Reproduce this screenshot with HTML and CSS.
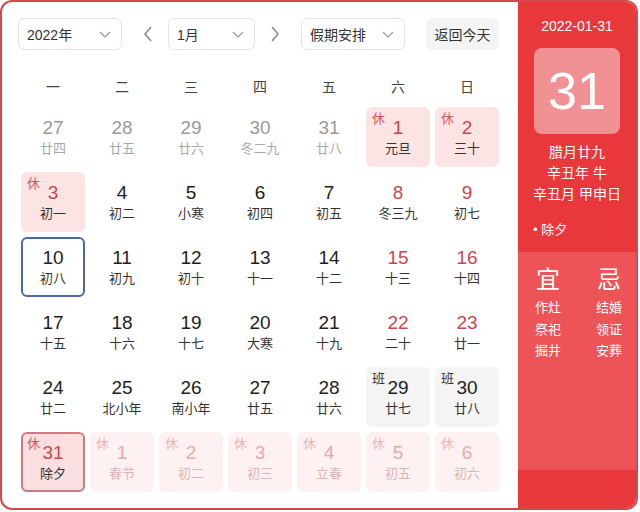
FILE: index.html
```html
<!DOCTYPE html>
<html lang="zh-CN">
<head>
<meta charset="utf-8">
<title>万年历</title>
<link rel="stylesheet" href="styles.css">
</head>
<body>
<div class="cal">
  <div class="main">
    <div class="toolbar">
      <div class="select sel-year"><span>2022年</span>
        <svg class="chev" width="12" height="7" viewBox="0 0 12 7"><polyline points="1,1 6,6 11,1" fill="none" stroke="#999" stroke-width="1.2"/></svg>
      </div>
      <button class="arrow arrow-prev" aria-label="上个月">
        <svg width="10" height="16" viewBox="0 0 10 16"><polyline points="8,1 2,8 8,15" fill="none" stroke="#888" stroke-width="1.5"/></svg>
      </button>
      <div class="select sel-month"><span>1月</span>
        <svg class="chev" width="12" height="7" viewBox="0 0 12 7"><polyline points="1,1 6,6 11,1" fill="none" stroke="#999" stroke-width="1.2"/></svg>
      </div>
      <button class="arrow arrow-next" aria-label="下个月">
        <svg width="10" height="16" viewBox="0 0 10 16"><polyline points="2,1 8,8 2,15" fill="none" stroke="#888" stroke-width="1.5"/></svg>
      </button>
      <div class="select sel-hol"><span>假期安排</span>
        <svg class="chev" width="12" height="7" viewBox="0 0 12 7"><polyline points="1,1 6,6 11,1" fill="none" stroke="#999" stroke-width="1.2"/></svg>
      </div>
      <button class="today-btn">返回今天</button>
    </div>

    <div class="grid">
      <div class="wd">一</div><div class="wd">二</div><div class="wd">三</div><div class="wd">四</div><div class="wd">五</div><div class="wd">六</div><div class="wd">日</div>

      <div class="cell prev"><span class="num">27</span><span class="lunar">廿四</span></div>
      <div class="cell prev"><span class="num">28</span><span class="lunar">廿五</span></div>
      <div class="cell prev"><span class="num">29</span><span class="lunar">廿六</span></div>
      <div class="cell prev"><span class="num">30</span><span class="lunar">冬二九</span></div>
      <div class="cell prev"><span class="num">31</span><span class="lunar">廿八</span></div>
      <div class="cell hol"><i class="tag">休</i><span class="num">1</span><span class="lunar">元旦</span></div>
      <div class="cell hol"><i class="tag">休</i><span class="num">2</span><span class="lunar">三十</span></div>

      <div class="cell hol"><i class="tag">休</i><span class="num">3</span><span class="lunar">初一</span></div>
      <div class="cell"><span class="num">4</span><span class="lunar">初二</span></div>
      <div class="cell"><span class="num">5</span><span class="lunar">小寒</span></div>
      <div class="cell"><span class="num">6</span><span class="lunar">初四</span></div>
      <div class="cell"><span class="num">7</span><span class="lunar">初五</span></div>
      <div class="cell wkd"><span class="num">8</span><span class="lunar">冬三九</span></div>
      <div class="cell wkd"><span class="num">9</span><span class="lunar">初七</span></div>

      <div class="cell today"><span class="num">10</span><span class="lunar">初八</span></div>
      <div class="cell"><span class="num">11</span><span class="lunar">初九</span></div>
      <div class="cell"><span class="num">12</span><span class="lunar">初十</span></div>
      <div class="cell"><span class="num">13</span><span class="lunar">十一</span></div>
      <div class="cell"><span class="num">14</span><span class="lunar">十二</span></div>
      <div class="cell wkd"><span class="num">15</span><span class="lunar">十三</span></div>
      <div class="cell wkd"><span class="num">16</span><span class="lunar">十四</span></div>

      <div class="cell"><span class="num">17</span><span class="lunar">十五</span></div>
      <div class="cell"><span class="num">18</span><span class="lunar">十六</span></div>
      <div class="cell"><span class="num">19</span><span class="lunar">十七</span></div>
      <div class="cell"><span class="num">20</span><span class="lunar">大寒</span></div>
      <div class="cell"><span class="num">21</span><span class="lunar">十九</span></div>
      <div class="cell wkd"><span class="num">22</span><span class="lunar">二十</span></div>
      <div class="cell wkd"><span class="num">23</span><span class="lunar">廿一</span></div>

      <div class="cell"><span class="num">24</span><span class="lunar">廿二</span></div>
      <div class="cell"><span class="num">25</span><span class="lunar">北小年</span></div>
      <div class="cell"><span class="num">26</span><span class="lunar">南小年</span></div>
      <div class="cell"><span class="num">27</span><span class="lunar">廿五</span></div>
      <div class="cell"><span class="num">28</span><span class="lunar">廿六</span></div>
      <div class="cell work"><i class="tag">班</i><span class="num">29</span><span class="lunar">廿七</span></div>
      <div class="cell work"><i class="tag">班</i><span class="num">30</span><span class="lunar">廿八</span></div>

      <div class="cell hol selected"><i class="tag">休</i><span class="num">31</span><span class="lunar">除夕</span></div>
      <div class="cell hol next"><i class="tag">休</i><span class="num">1</span><span class="lunar">春节</span></div>
      <div class="cell hol next"><i class="tag">休</i><span class="num">2</span><span class="lunar">初二</span></div>
      <div class="cell hol next"><i class="tag">休</i><span class="num">3</span><span class="lunar">初三</span></div>
      <div class="cell hol next"><i class="tag">休</i><span class="num">4</span><span class="lunar">立春</span></div>
      <div class="cell hol next"><i class="tag">休</i><span class="num">5</span><span class="lunar">初五</span></div>
      <div class="cell hol next"><i class="tag">休</i><span class="num">6</span><span class="lunar">初六</span></div>
    </div>
  </div>

  <aside class="side">
    <div class="side-top">
      <div class="side-date">2022-01-31</div>
      <div class="big-day">31</div>
      <div class="lunar-info">
        <div>腊月廿九</div>
        <div>辛丑年 牛</div>
        <div>辛丑月 甲申日</div>
      </div>
      <div class="festival">• 除夕</div>
    </div>
    <div class="yiji">
      <div class="yj-col">
        <div class="yj-title">宜</div>
        <div>作灶</div><div>祭祀</div><div>掘井</div>
      </div>
      <div class="yj-col">
        <div class="yj-title">忌</div>
        <div>结婚</div><div>领证</div><div>安葬</div>
      </div>
    </div>
  </aside>
</div>
</body>
</html>
```

FILE: styles.css
```css
* { box-sizing: border-box; }
html, body { margin: 0; padding: 0; background: #fff; }
body {
  font-family: "Liberation Sans", "Noto Sans CJK SC", sans-serif;
  color: #222;
}
.cal {
  width: 638px;
  height: 510px;
  border: 2px solid #d24a4e;
  border-radius: 12px;
  overflow: hidden;
  display: flex;
}
.main {
  width: 516px;
  padding: 16px 0 0 16px;
}
.toolbar {
  display: flex;
  align-items: center;
  height: 32px;
}
.select {
  height: 32px;
  border: 1px solid #e4e4e4;
  border-radius: 6px;
  display: flex;
  align-items: center;
  justify-content: space-between;
  padding: 0 10px 0 8px;
  font-size: 14px;
  color: #333;
}
.sel-year { width: 104px; }
.sel-month { width: 87px; }
.sel-hol { width: 104px; }
.arrow {
  border: 0;
  background: none;
  padding: 0;
  height: 32px;
  display: flex;
  align-items: center;
}
.arrow-prev { margin: 0 15px 0 21px; }
.arrow-next { margin: 0 21px 0 15px; }
.today-btn {
  margin-left: 21px;
  width: 73px;
  height: 32px;
  border: 0;
  border-radius: 6px;
  background: #f4f4f4;
  font-family: inherit;
  font-size: 14px;
  color: #333;
  padding: 0;
}
.grid {
  margin: 20px 0 0 3px;
  display: grid;
  grid-template-columns: repeat(7, 64px);
  grid-template-rows: 32px repeat(6, 60px);
  gap: 5px;
}
.wd {
  display: flex;
  align-items: center;
  justify-content: center;
  font-size: 14px;
  color: #444;
}
.cell {
  position: relative;
  border-radius: 6px;
  display: flex;
  flex-direction: column;
  align-items: center;
  justify-content: center;
}
.num {
  font-size: 19px;
  line-height: 24px;
  color: #1e1e1e;
}
.lunar {
  font-size: 13px;
  line-height: 18px;
  color: #333;
}
.tag {
  position: absolute;
  left: 6px;
  top: 4px;
  font-style: normal;
  font-size: 13px;
  line-height: 16px;
  color: #d5545a;
}
.prev .num { color: #9a9a9a; }
.prev .lunar { color: #a8a8a8; }
.wkd .num { color: #c8474d; }
.hol { background: #fce3e4; }
.hol .num { color: #c8474d; }
.work { background: #f4f4f4; }
.work .tag { color: #333; }
.today { border: 2px solid #4c67ad; }
.selected { border: 2px solid #d0797e; background: #fbdfe0; }
.selected .tag { left: 4px; top: 2px; }
.next { background: #fdf1f1; }
.next .num { color: #eaa8ac; }
.next .lunar { color: #dcb4b6; }
.next .tag { color: #ecb4b7; }

.side {
  flex: 1;
  background: #e8383b;
  color: #fff;
  display: flex;
  flex-direction: column;
}
.side-top {
  height: 250px;
  padding-top: 14px;
  display: flex;
  flex-direction: column;
  align-items: center;
}
.side-date {
  font-size: 14px;
  line-height: 20px;
}
.big-day {
  margin-top: 12px;
  width: 86px;
  height: 86px;
  border-radius: 8px;
  background: rgba(255, 255, 255, 0.45);
  display: flex;
  align-items: center;
  justify-content: center;
  font-size: 52px;
}
.lunar-info {
  margin-top: 8px;
  text-align: center;
  font-size: 14px;
  line-height: 21px;
}
.festival {
  align-self: flex-start;
  margin: 14px 0 0 15px;
  font-size: 13px;
  line-height: 21px;
}
.yiji {
  height: 218px;
  background: #ed5457;
  padding: 12px 0 0 17px;
  display: flex;
  gap: 35px;
}
.yj-col {
  width: 26px;
  text-align: center;
  font-size: 13px;
  line-height: 21.5px;
}
.yj-title {
  font-size: 24px;
  line-height: 32px;
  margin-bottom: 1px;
}
```
